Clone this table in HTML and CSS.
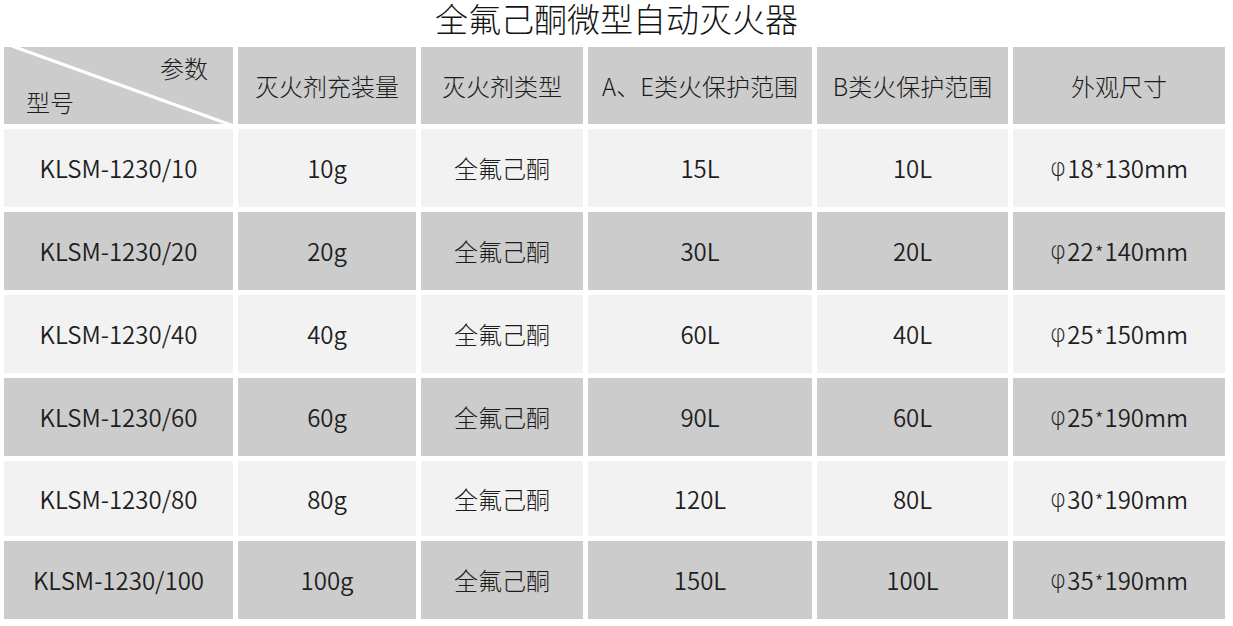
FILE: index.html
```html
<!DOCTYPE html>
<html lang="zh-CN">
<head>
<meta charset="utf-8">
<title>全氟己酮微型自动灭火器</title>
<link rel="stylesheet" href="styles.css">
</head>
<body>
<h1 class="title">全氟己酮微型自动灭火器</h1>
<div class="table">
  <div class="row head">
    <div class="cell corner">
      <svg class="diag" viewBox="0 0 229 77" preserveAspectRatio="none"><line x1="8" y1="-1" x2="230" y2="79" stroke="#ffffff" stroke-width="3.2"/></svg>
      <span class="c-top">参数</span>
      <span class="c-bot">型号</span>
    </div>
    <div class="cell">灭火剂充装量</div>
    <div class="cell">灭火剂类型</div>
    <div class="cell">A、E类火保护范围</div>
    <div class="cell">B类火保护范围</div>
    <div class="cell">外观尺寸</div>
  </div>
  <div class="row light">
    <div class="cell">KLSM-1230/10</div><div class="cell">10g</div><div class="cell">全氟己酮</div><div class="cell">15L</div><div class="cell">10L</div><div class="cell"><span class="phi">φ</span>18<span class="ast">*</span>130mm</div>
  </div>
  <div class="row dark">
    <div class="cell">KLSM-1230/20</div><div class="cell">20g</div><div class="cell">全氟己酮</div><div class="cell">30L</div><div class="cell">20L</div><div class="cell"><span class="phi">φ</span>22<span class="ast">*</span>140mm</div>
  </div>
  <div class="row light">
    <div class="cell">KLSM-1230/40</div><div class="cell">40g</div><div class="cell">全氟己酮</div><div class="cell">60L</div><div class="cell">40L</div><div class="cell"><span class="phi">φ</span>25<span class="ast">*</span>150mm</div>
  </div>
  <div class="row dark">
    <div class="cell">KLSM-1230/60</div><div class="cell">60g</div><div class="cell">全氟己酮</div><div class="cell">90L</div><div class="cell">60L</div><div class="cell"><span class="phi">φ</span>25<span class="ast">*</span>190mm</div>
  </div>
  <div class="row light short">
    <div class="cell">KLSM-1230/80</div><div class="cell">80g</div><div class="cell">全氟己酮</div><div class="cell">120L</div><div class="cell">80L</div><div class="cell"><span class="phi">φ</span>30<span class="ast">*</span>190mm</div>
  </div>
  <div class="row dark">
    <div class="cell">KLSM-1230/100</div><div class="cell">100g</div><div class="cell">全氟己酮</div><div class="cell">150L</div><div class="cell">100L</div><div class="cell"><span class="phi">φ</span>35<span class="ast">*</span>190mm</div>
  </div>
</div>
</body>
</html>
```
FILE: styles.css
```css
html, body {
  margin: 0;
  padding: 0;
  background: #ffffff;
}
body {
  font-family: "Noto Sans CJK SC", "Noto Sans", sans-serif;
  font-weight: 300;
  color: #1c1c1c;
  width: 1233px;
  height: 626px;
  overflow: hidden;
}
.title {
  margin: 0;
  height: 47px;
  font-size: 33px;
  font-weight: 300;
  line-height: 36px;
  text-align: center;
  color: #141414;
}
.table {
  display: flex;
  flex-direction: column;
  gap: 5px;
  margin-left: 4px;
}
.row {
  display: grid;
  grid-template-columns: 229px 178px 162px 224px 191px 212px;
  column-gap: 5px;
  height: 78px;
}
.row.head {
  height: 77px;
}
.row.short {
  height: 75px;
}
.cell {
  display: flex;
  align-items: center;
  justify-content: center;
  font-size: 24px;
  line-height: 30px;
  white-space: nowrap;
}
.light .cell,
.dark .cell {
  font-weight: 350;
  color: #1e1e1e;
}
.light .cell:nth-child(3),
.dark .cell:nth-child(3) {
  font-weight: 300;
  color: #1c1c1c;
}
.head .cell,
.dark .cell {
  background: #cccccc;
}
.light .cell {
  background: #f2f2f2;
}
.phi {
  font-family: "DejaVu Sans", sans-serif;
  font-weight: 200;
  font-size: 25px;
  margin-right: 1px;
}
.ast {
  position: relative;
  top: 2px;
  font-size: 20px;
  font-weight: 300;
  margin: 0 1px;
}
.cell.corner {
  position: relative;
  flex-direction: column;
  align-items: stretch;
  justify-content: flex-start;
  padding: 6px 25px 0 22px;
  gap: 4px;
}
.diag {
  position: absolute;
  left: 0;
  top: 0;
  width: 100%;
  height: 100%;
}
.c-top {
  position: relative;
  text-align: right;
}
.c-bot {
  position: relative;
  text-align: left;
}
```
